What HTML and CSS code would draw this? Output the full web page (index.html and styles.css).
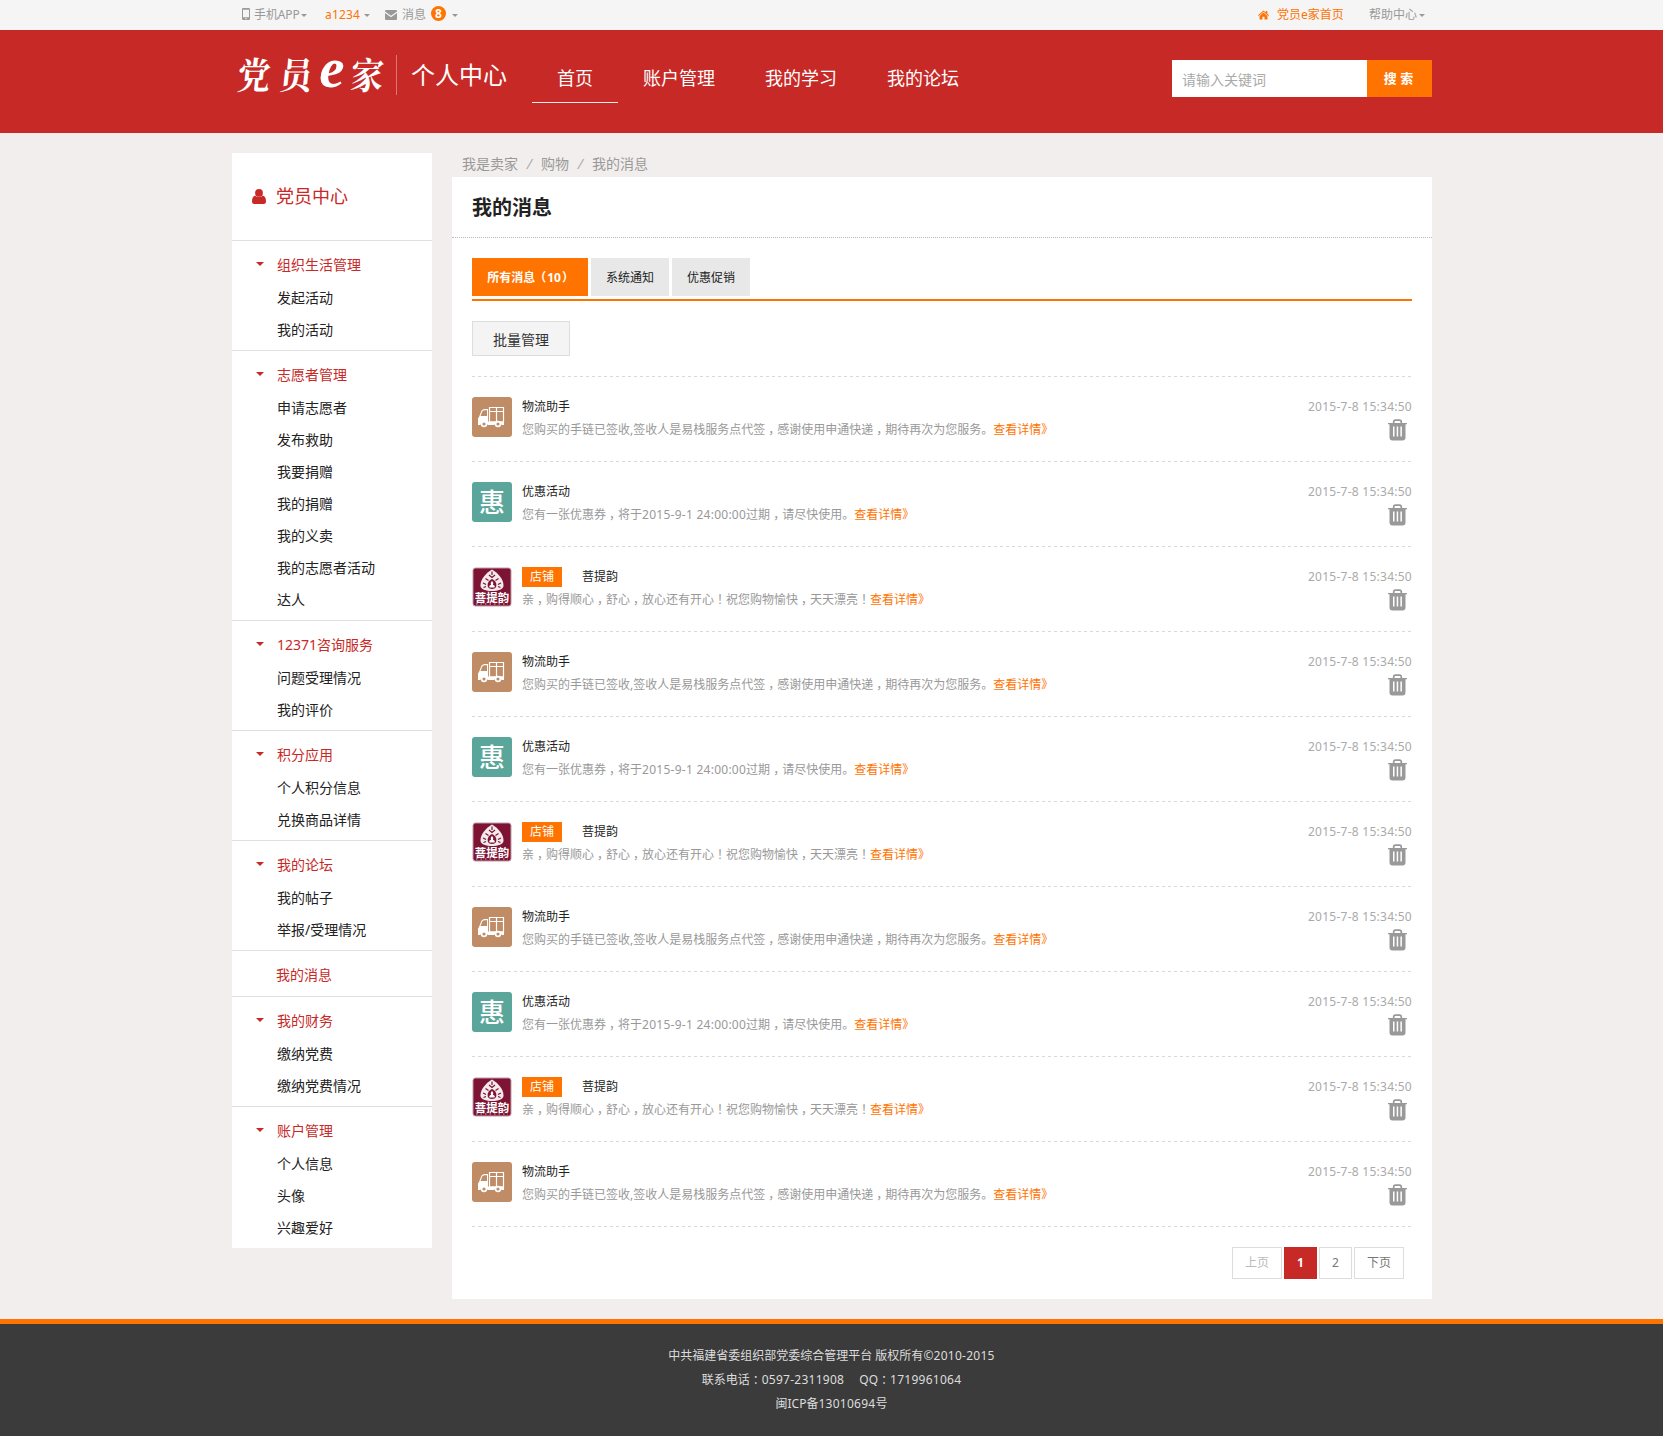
FILE: index.html
```html
<!DOCTYPE html>
<html lang="zh-CN">
<head>
<meta charset="utf-8">
<title>我的消息</title>
<link rel="stylesheet" href="styles.css">
</head>
<body>
<svg class="defs" width="0" height="0" aria-hidden="true">
  <symbol id="truck" viewBox="0 0 40 40">
    <rect width="40" height="40" rx="3" fill="#c08c66"/>
    <path d="M6 28V21.500L7 20L9.500 13.500L12 12H16V24.500H32V28H29.500A3.600 3.600 0 0 0 22.500 28H15.500A3.600 3.600 0 0 0 8.500 28Z" fill="#fff"/>
    <path d="M8.500 19L10.500 14L12.300 13.200H15V19Z" fill="#c08c66"/>
    <path d="M17.500 10.500H31.500V25H17.500ZM24.500 10V25M17 14.500H32" fill="none" stroke="#fff" stroke-width="1.200"/>
    <circle cx="12" cy="27" r="2.400" fill="#c08c66" stroke="#fff" stroke-width="1.600"/>
    <circle cx="26" cy="27" r="2.400" fill="#c08c66" stroke="#fff" stroke-width="1.600"/>
  </symbol>
  <symbol id="shop" viewBox="0 0 40 40">
    <rect x="1" y="1" width="38" height="38" rx="2.500" fill="#7d1434" stroke="#c39aa8" stroke-width="1"/>
    <path d="M20 2.500C26 6 31.500 12 31.500 18.500C31.500 22.500 26 24 20 24S8.500 22.500 8.500 18.500C8.500 12 14 6 20 2.500Z" fill="#f4e9ec"/>
    <path d="M20 4.500V8M17 8L20 10.500L23 8M13.500 11.500L16.500 13.500M26.500 11.500L23.500 13.500M11 16L14 17.500M29 16L26 17.500M11.500 20.500L14 19.500M28.500 20.500L26 19.500" fill="none" stroke="#7d1434" stroke-width="1.200"/>
    <path d="M20 12C24 14 25 17 24 20C23 22.500 17 22.500 16 20C15 17 16 14 20 12Z" fill="#7d1434"/>
    <path d="M20 13.800Q22 16 21 18Q23.500 18.500 22.500 20.500H17.500Q16.500 18.500 19 18Q18 16 20 13.800Z" fill="#fff"/>
    <text x="20" y="34.500" text-anchor="middle" class="shop-word">菩提韵</text>
    <path d="M4 37H36" stroke="#d5b3be" stroke-width="1" stroke-dasharray="1.500 3"/>
  </symbol>
  <symbol id="trash" viewBox="0 0 19 22">
    <path d="M5.700 4.500V3Q5.700 1.200 7.500 1.200H11.500Q13.300 1.200 13.300 3V4.500" fill="none" stroke="#999" stroke-width="1.700"/>
    <path d="M0 4H19V5.300H17.500V18.500Q17.500 21.500 14.500 21.500H4.500Q1.500 21.500 1.500 18.500V5.300H0ZM5 7.500V17.500H6.500V7.500ZM8.700 7.500V17.500H10.200V7.500ZM12.400 7.500V17.500H13.900V7.500Z" fill="#999" fill-rule="evenodd"/>
  </symbol>
</svg>

<div class="topbar">
  <div class="wrap topbar-in">
    <a class="t-phone"><svg width="8" height="12" viewBox="0 0 8 12"><path d="M1.200 0H6.800Q8 0 8 1.200V10.800Q8 12 6.800 12H1.200Q0 12 0 10.800V1.200Q0 0 1.200 0ZM1 1.700V9.300H7V1.700ZM3.400 10.100V11.200H4.600V10.100Z" fill="#999" fill-rule="evenodd"/></svg><span>手机APP</span><i class="caret"></i></a>
    <a class="t-user"><span>a1234</span><i class="caret"></i></a>
    <a class="t-msg"><svg width="12" height="10" viewBox="0 0 12 10"><path d="M0 1Q0 0 1 0H11Q12 0 12 1V1.600L6 5.800L0 1.600ZM0 3L6 7.200L12 3V9Q12 10 11 10H1Q0 10 0 9Z" fill="#999"/></svg><span>消息</span><b class="badge">8</b><i class="caret"></i></a>
    <a class="t-home"><svg width="11" height="10" viewBox="0 0 12 10"><path d="M6 0L8.500 2.200V.7H10.200V3.700L12 5.300L11.300 6L6 1.500L.7 6L0 5.300ZM6 2.300L10.300 6V10H7.100V7H4.900V10H1.700V6Z" fill="#ff7300"/></svg><span>党员e家首页</span></a>
    <a class="t-help"><span>帮助中心</span><i class="caret"></i></a>
  </div>
</div>

<header class="header">
  <div class="wrap header-in">
    <div class="logo"><span>党</span><span>员</span><em>e</em><span>家</span></div>
    <div class="site">个人中心</div>
    <nav class="nav"><a class="on">首页</a><a>账户管理</a><a>我的学习</a><a>我的论坛</a></nav>
    <form class="search"><div class="search-input">请输入关键词</div><div class="search-btn">搜 索</div></form>
  </div>
</header>

<div class="wrap body">
  <aside class="side">
    <h2><svg width="14" height="15" viewBox="0 0 14 15"><path d="M3.300 6.500C4.500 8.500 9.500 8.500 10.700 6.500C13 7 14 9.500 14 12.500C14 14 13.200 15 11.800 15H2.200C.8 15 0 14 0 12.500C0 9.500 1 7 3.300 6.500Z" fill="#c72927"/><circle cx="7" cy="3.900" r="3.900" fill="#c72927"/></svg>党员中心</h2>
    <div class="group"><h3><i></i>组织生活管理</h3><a>发起活动</a><a>我的活动</a></div>
    <div class="group"><h3><i></i>志愿者管理</h3><a>申请志愿者</a><a>发布救助</a><a>我要捐赠</a><a>我的捐赠</a><a>我的义卖</a><a>我的志愿者活动</a><a>达人</a></div>
    <div class="group"><h3><i></i>12371咨询服务</h3><a>问题受理情况</a><a>我的评价</a></div>
    <div class="group"><h3><i></i>积分应用</h3><a>个人积分信息</a><a>兑换商品详情</a></div>
    <div class="group"><h3><i></i>我的论坛</h3><a>我的帖子</a><a>举报/受理情况</a></div>
    <div class="single">我的消息</div>
    <div class="group"><h3><i></i>我的财务</h3><a>缴纳党费</a><a>缴纳党费情况</a></div>
    <div class="group"><h3><i></i>账户管理</h3><a>个人信息</a><a>头像</a><a>兴趣爱好</a></div>
  </aside>

  <main class="main">
    <div class="crumb"><span>我是卖家</span><i>/</i><span>购物</span><i>/</i><span>我的消息</span></div>
    <section class="panel">
      <h1>我的消息</h1>
      <div class="content">
        <div class="tabs"><a class="on">所有消息<u class="open">（</u>10<u class="close">）</u></a><a>系统通知</a><a>优惠促销</a></div>
        <a class="batch">批量管理</a>
        <ul class="list">
          <li><svg class="pic"><use href="#truck"/></svg><div class="txt"><h4>物流助手</h4><p>您购买的手链已签收,签收人是易栈服务点代签<u>，</u>感谢使用申通快递<u>，</u>期待再次为您服务。<a>查看详情》</a></p></div><div class="meta"><time>2015-7-8 15:34:50</time><svg class="del"><use href="#trash"/></svg></div></li>
          <li><div class="pic hui">惠</div><div class="txt"><h4>优惠活动</h4><p>您有一张优惠券<u>，</u>将于<s>2015-9-1 24:00:00</s>过期<u>，</u>请尽快使用。<a>查看详情》</a></p></div><div class="meta"><time>2015-7-8 15:34:50</time><svg class="del"><use href="#trash"/></svg></div></li>
          <li><svg class="pic"><use href="#shop"/></svg><div class="txt"><h4><b>店铺</b>菩提韵</h4><p>亲<u>，</u>购得顺心<u>，</u>舒心<u>，</u>放心还有开心<u>！</u>祝您购物愉快<u>，</u>天天漂亮<u>！</u><a>查看详情》</a></p></div><div class="meta"><time>2015-7-8 15:34:50</time><svg class="del"><use href="#trash"/></svg></div></li>
          <li><svg class="pic"><use href="#truck"/></svg><div class="txt"><h4>物流助手</h4><p>您购买的手链已签收,签收人是易栈服务点代签<u>，</u>感谢使用申通快递<u>，</u>期待再次为您服务。<a>查看详情》</a></p></div><div class="meta"><time>2015-7-8 15:34:50</time><svg class="del"><use href="#trash"/></svg></div></li>
          <li><div class="pic hui">惠</div><div class="txt"><h4>优惠活动</h4><p>您有一张优惠券<u>，</u>将于<s>2015-9-1 24:00:00</s>过期<u>，</u>请尽快使用。<a>查看详情》</a></p></div><div class="meta"><time>2015-7-8 15:34:50</time><svg class="del"><use href="#trash"/></svg></div></li>
          <li><svg class="pic"><use href="#shop"/></svg><div class="txt"><h4><b>店铺</b>菩提韵</h4><p>亲<u>，</u>购得顺心<u>，</u>舒心<u>，</u>放心还有开心<u>！</u>祝您购物愉快<u>，</u>天天漂亮<u>！</u><a>查看详情》</a></p></div><div class="meta"><time>2015-7-8 15:34:50</time><svg class="del"><use href="#trash"/></svg></div></li>
          <li><svg class="pic"><use href="#truck"/></svg><div class="txt"><h4>物流助手</h4><p>您购买的手链已签收,签收人是易栈服务点代签<u>，</u>感谢使用申通快递<u>，</u>期待再次为您服务。<a>查看详情》</a></p></div><div class="meta"><time>2015-7-8 15:34:50</time><svg class="del"><use href="#trash"/></svg></div></li>
          <li><div class="pic hui">惠</div><div class="txt"><h4>优惠活动</h4><p>您有一张优惠券<u>，</u>将于<s>2015-9-1 24:00:00</s>过期<u>，</u>请尽快使用。<a>查看详情》</a></p></div><div class="meta"><time>2015-7-8 15:34:50</time><svg class="del"><use href="#trash"/></svg></div></li>
          <li><svg class="pic"><use href="#shop"/></svg><div class="txt"><h4><b>店铺</b>菩提韵</h4><p>亲<u>，</u>购得顺心<u>，</u>舒心<u>，</u>放心还有开心<u>！</u>祝您购物愉快<u>，</u>天天漂亮<u>！</u><a>查看详情》</a></p></div><div class="meta"><time>2015-7-8 15:34:50</time><svg class="del"><use href="#trash"/></svg></div></li>
          <li><svg class="pic"><use href="#truck"/></svg><div class="txt"><h4>物流助手</h4><p>您购买的手链已签收,签收人是易栈服务点代签<u>，</u>感谢使用申通快递<u>，</u>期待再次为您服务。<a>查看详情》</a></p></div><div class="meta"><time>2015-7-8 15:34:50</time><svg class="del"><use href="#trash"/></svg></div></li>
        </ul>
        <div class="pager"><a class="wide off">上页</a><a class="cur">1</a><a>2</a><a class="wide">下页</a></div>
      </div>
    </section>
  </main>
</div>

<footer class="footer">
  <p>中共福建省委组织部党委综合管理平台 版权所有<s>©2010-2015</s></p>
  <p>联系电话<u>：</u><s>0597-2311908</s> <span class="qq">QQ<u>：</u><s>1719961064</s></span></p>
  <p>闽ICP备<s>13010694</s>号</p>
</footer>
</body>
</html>
```
FILE: styles.css
```css
* { box-sizing: border-box; }
body, h1, h2, h3, h4, p, ul { margin: 0; padding: 0; font-weight: normal; }
body {
  background: #f2eeed;
  color: #222;
  font: 12px/24px "Noto Sans", "Noto Sans CJK SC", sans-serif;
}
ul { list-style: none; }
i, em { font-style: normal; }
u, s { text-decoration: none; }
svg { display: block; flex: none; }
.defs { display: none; }
.wrap { width: 1200px; margin-left: 232px; }

/* full-width punctuation sits in the middle of its cell */
u { display: inline-block; width: 1em; text-indent: 3px; line-height: 1; }
u.open { text-indent: -2px; }
u.close { text-indent: 1px; }

.topbar { height: 30px; background: #f5f5f5; color: #999; white-space: nowrap; }
.topbar-in { display: flex; }
.topbar a { display: flex; align-items: center; height: 29px; }
.caret { border: 3px solid transparent; border-top-color: #999; border-bottom: 0; margin-top: 1px; }
.t-phone { width: 83px; padding-left: 10px; margin-right: 10px; }
.t-phone svg { margin-right: 4px; margin-top: -1px; }
.t-phone span { width: 47px; letter-spacing: -.1px; }
.t-user { width: 60px; color: #ff7300; }
.t-user span { width: 39px; letter-spacing: .2px; }
.t-msg svg { margin-right: 5px; }
.badge {
  width: 15px; height: 15px; margin: -2px 6px 0 5px; border-radius: 50%;
  background: #ff7300; color: #fff; text-align: center; line-height: 15px;
}
.t-home { margin-left: auto; width: 111px; color: #ff7300; }
.t-home svg { margin-right: 8px; }
.t-help { width: 63px; }
.t-help .caret { margin-left: 2px; }

.header { height: 103px; background: #c72927; color: #fff; }
.header-in { display: flex; align-items: flex-start; }
.logo {
  display: flex; align-items: center; justify-content: space-between;
  width: 165px; height: 40px; margin-top: 25px; padding: 0 12px 0 6px;
  border-right: 1px solid #dd7573;
  font: bold 33px/36px "Noto Serif CJK SC", "Noto Sans CJK SC", serif;
}
.logo span { transform: skewX(-6deg) scaleY(1.12); margin-top: -5px; }
.logo em { font: italic bold 57px/30px "Liberation Serif", serif; margin: -15px -2px 0; }
.site { margin: 27px 0 0 14px; width: 121px; font-size: 24px; line-height: 36px; }
.nav { display: flex; margin-top: 30px; }
.nav a { height: 43px; padding: 0 25px; font-size: 18px; line-height: 37px; border-bottom: 1px solid transparent; }
.nav .on { border-color: #f2eeed; }
.search { display: flex; margin: 30px 0 0 auto; font-size: 14px; line-height: 37px; }
.search-input { width: 195px; height: 37px; padding-left: 10px; background: #fff; color: #aaa; line-height: 39px; }
.search-btn { width: 65px; height: 37px; padding-right: 2px; background: #ff7300; text-align: center; font-size: 13px; font-weight: bold; }

.body { display: flex; gap: 20px; padding-top: 20px; align-items: flex-start; }
.side { width: 200px; background: #fff; font-size: 14px; }
.side h2 { display: flex; align-items: center; gap: 10px; height: 87px; padding: 0 0 2px 20px; font-size: 18px; color: #c72927; }
.side h2 svg { margin-top: 1px; }
.group { border-top: 1px solid #e0e0e0; padding: 8px 0 4px 45px; }
.group h3 { display: flex; align-items: center; height: 33px; margin-left: -21px; padding-bottom: 2px; font-size: 14px; color: #c72927; }
.group h3 i { border: 4px solid transparent; border-top-color: #c72927; border-bottom: 0; margin: -2px 13px 0 0; }
.group a { display: block; height: 32px; line-height: 32px; }
.single { height: 46px; border-top: 1px solid #e0e0e0; padding-left: 44px; line-height: 48px; color: #c72927; }

.main { width: 980px; }
.crumb { display: flex; height: 24px; padding-left: 10px; font-size: 14px; line-height: 21px; color: #999; }
.crumb i { width: 23px; text-align: center; color: #aaa; transform: skewX(-12deg); }
.panel { height: 1122px; background: #fff; }
.panel h1 { height: 61px; padding-left: 20px; border-bottom: 1px dotted #bbb; font-size: 20px; font-weight: bold; line-height: 62px; }
.content { padding: 20px 20px 0; }
.tabs { display: flex; gap: 3px; height: 43px; border-bottom: 2px solid #ff7300; }
.tabs a { width: 78px; height: 38px; line-height: 39px; text-align: center; background: #e8e8e8; white-space: nowrap; }
.tabs .on { width: 116px; background: #ff7300; color: #fff; font-weight: bold; }
.batch { display: block; width: 98px; height: 35px; margin: 20px 0; border: 1px solid #ddd; background: #f4f4f4; font-size: 14px; line-height: 35px; text-align: center; color: #333; }

.list, .list li { background: repeating-linear-gradient(90deg, #d8d8d8 0 3px, transparent 3px 6px) left bottom / 100% 1px no-repeat; }
.list { background-position: left top; padding-top: 1px; }
.list li { display: flex; height: 85px; padding-top: 20px; }
.pic { width: 40px; height: 40px; margin-right: 10px; flex: none; }
.hui { border-radius: 3px; background: #5aa69b; color: #fff; font-size: 26px; font-weight: 500; line-height: 40px; text-align: center; }
.shop-word { font: bold 11.5px "Noto Sans CJK SC", sans-serif; fill: #fff; }
.txt { flex: 1; }
.txt h4 { display: flex; height: 20px; font-size: 12px; line-height: 19px; }
.txt h4 b { width: 40px; margin-right: 20px; background: #ff7300; color: #fff; font-weight: normal; text-align: center; line-height: 20px; }
.txt p { height: 26px; line-height: 26px; color: #999; }
.txt p a { color: #ff7300; }
s, time { letter-spacing: .26px; }
.meta { text-align: right; color: #aaa; }
.meta time { display: block; height: 22px; line-height: 19px; }
.del { width: 19px; height: 22px; margin: 0 5px 0 auto; }

.pager { display: flex; justify-content: flex-end; gap: 2px; padding: 20px 8px 0 0; color: #777; }
.pager a { width: 33px; height: 32px; border: 1px solid #ddd; line-height: 30px; text-align: center; }
.pager .wide { width: 50px; }
.pager .off { color: #bbb; }
.pager .cur { background: #c72927; border-color: #c72927; color: #fff; font-weight: bold; }

.footer { height: 117px; margin-top: 20px; padding-top: 20px; border-top: 5px solid #ff7300; background: #3b3b3b; color: #ddd; text-align: center; }
.qq { margin-left: 12px; }
```
